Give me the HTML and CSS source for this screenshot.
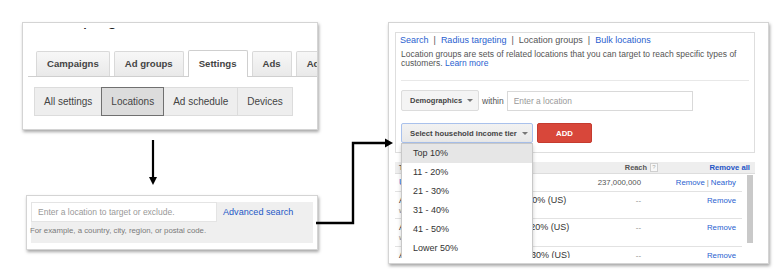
FILE: index.html
```html
<!DOCTYPE html>
<html lang="en">
<head>
    <meta charset="UTF-8">
    <title>Location groups</title>
    <link rel="stylesheet" href="styles.css">
</head>
<body>
<div class="canvas">

    <!-- campaign settings tabs -->
    <div class="shot shot-tabs">
        <div class="page-title"><span>Campaign</span></div>
        <div class="tabs">
            <span class="tab">Campaigns</span>
            <span class="tab">Ad groups</span>
            <span class="tab active">Settings</span>
            <span class="tab">Ads</span>
            <span class="tab">Ad extensions</span>
        </div>
        <div class="subtabs">
            <span class="subtab">All settings</span>
            <span class="subtab active">Locations</span>
            <span class="subtab">Ad schedule</span>
            <span class="subtab">Devices</span>
        </div>
    </div>

    <!-- location search box -->
    <div class="shot shot-search">
        <div class="search-area">
            <div class="search-row">
                <div class="search-input">Enter a location to target or exclude.</div>
                <a class="search-link" href="javascript:void(0)">Advanced search</a>
            </div>
            <div class="search-hint">For example, a country, city, region, or postal code.</div>
        </div>
    </div>

    <!-- location groups panel -->
    <div class="shot shot-groups">
        <div class="crop">
            <div class="loc-box">
                <div class="loc-links">
                    <a href="javascript:void(0)">Search</a><span class="sep">|</span><a href="javascript:void(0)">Radius targeting</a><span class="sep">|</span><span class="current">Location groups</span><span class="sep">|</span><a href="javascript:void(0)">Bulk locations</a>
                </div>
                <div class="loc-desc">Location groups are sets of related locations that you can target to reach specific types of customers. <a href="javascript:void(0)">Learn more</a></div>
                <div class="loc-rule"></div>
                <div class="loc-row">
                    <span class="btn btn-demo">Demographics<i class="caret"></i></span>
                    <span class="within">within</span>
                    <span class="loc-input">Enter a location</span>
                </div>
                <div class="loc-row loc-row-tier">
                    <span class="btn btn-tier">Select household income tier<i class="caret"></i></span>
                    <span class="btn btn-add">ADD</span>
                </div>
            </div>

            <div class="targets">
                <div class="targets-head">
                    <span class="th-name">Targeted locations</span>
                    <span class="th-reach">Reach <i class="help">?</i></span>
                    <span class="th-remove"><a href="javascript:void(0)">Remove all</a></span>
                </div>
                <div class="targets-body">
                    <div class="rows">
                        <div class="row row-first">
                            <span class="cell-name"><a href="javascript:void(0)">United States</a></span>
                            <span class="cell-reach">237,000,000</span>
                            <span class="cell-act"><a href="javascript:void(0)">Remove</a><span class="bar">|</span><a href="javascript:void(0)">Nearby</a></span>
                        </div>
                        <div class="row">
                            <span class="cell-name">Average household income Top 10% (US)<small>within United States</small></span>
                            <span class="cell-reach dash">--</span>
                            <span class="cell-act"><a href="javascript:void(0)">Remove</a></span>
                        </div>
                        <div class="row">
                            <span class="cell-name">Average household income: 11 - 20% (US)<small>within United States</small></span>
                            <span class="cell-reach dash">--</span>
                            <span class="cell-act"><a href="javascript:void(0)">Remove</a></span>
                        </div>
                        <div class="row">
                            <span class="cell-name">Average household income: 21 - 30% (US)<small>within United States</small></span>
                            <span class="cell-reach dash">--</span>
                            <span class="cell-act"><a href="javascript:void(0)">Remove</a></span>
                        </div>
                    </div>
                    <div class="track"><div class="thumb"></div></div>
                </div>
            </div>

            <!-- open income tier menu -->
            <ul class="menu">
                <li class="hover">Top 10%</li>
                <li>11 - 20%</li>
                <li>21 - 30%</li>
                <li>31 - 40%</li>
                <li>41 - 50%</li>
                <li>Lower 50%</li>
            </ul>
        </div>
    </div>

    <!-- arrows between the shots -->
    <svg class="arrows" width="780" height="275" viewBox="0 0 780 275">
        <line x1="153" y1="140" x2="153" y2="178" stroke="#000" stroke-width="2.2"/>
        <polygon points="149,177 157,177 153,185" fill="#000"/>
        <polyline points="316,223 353,223 353,143 386,143" fill="none" stroke="#000" stroke-width="2.4"/>
        <polygon points="385,138.5 393,143 385,147.5" fill="#000"/>
    </svg>
</div>
</body>
</html>
```

FILE: styles.css
```css
*{
    box-sizing: border-box;
}
body{
    margin: 0;
    background: #fff;
    font-family: "Liberation Sans", Arial, sans-serif;
    color: #444;
}
a{
    color: #2a5fd0;
    text-decoration: none;
}
.canvas{
    position: relative;
    width: 780px;
    height: 275px;
    overflow: hidden;
}
.shot{
    position: absolute;
    background: #fff;
    border: 1px solid #d4d4d4;
    box-shadow: 1px 2px 3px rgba(0,0,0,.35);
    overflow: hidden;
}

/* tabs shot */
.shot-tabs{
    left: 22px;
    top: 22px;
    width: 296px;
    height: 108px;
}
.page-title{
    margin-top: 5px;
    height: 3px;
    padding-left: 22px;
    overflow: hidden;
    white-space: nowrap;
}
.page-title span{
    display: block;
    margin-top: -18px;
    font-size: 18px;
    line-height: 18px;
    color: #222;
}
.tabs{
    display: flex;
    align-items: flex-end;
    gap: 4px;
    height: 27px;
    margin: 19px 0 0 5px;
    padding-left: 8px;
    border-bottom: 1px solid #cfcfcf;
    white-space: nowrap;
}
.tab{
    height: 25px;
    line-height: 24px;
    padding: 0 10px;
    border: 1px solid #d9d9d9;
    border-bottom: none;
    border-radius: 2px 2px 0 0;
    background: linear-gradient(#f7f7f7, #e9e9e9);
    font-size: 9.6px;
    font-weight: bold;
    color: #444;
}
.tab.active{
    height: 27px;
    margin-bottom: -1px;
    line-height: 26px;
    background: #fff;
    border-color: #cfcfcf;
}
.subtabs{
    display: flex;
    height: 29px;
    margin: 10px 0 0 11px;
}
.subtab{
    line-height: 27px;
    padding: 0 9px;
    border: 1px solid #dcdcdc;
    background: #eeeeee;
    font-size: 10px;
    color: #444;
}
.subtab + .subtab{
    margin-left: -1px;
}
.subtab.active{
    position: relative;
    z-index: 1;
    background: #dcdcdc;
    border-color: #707070;
}

/* search shot */
.shot-search{
    left: 26px;
    top: 195px;
    width: 292px;
    height: 55px;
    padding: 6px 4px 5px 4px;
}
.search-area{
    height: 41px;
    background: #efefef;
}
.search-row{
    display: flex;
    align-items: center;
}
.search-input{
    width: 186px;
    height: 20px;
    padding-left: 6px;
    line-height: 18px;
    background: #fff;
    border: 1px solid #e4e4e4;
    font-size: 8.5px;
    color: #999;
}
.search-link{
    margin-left: 6px;
    font-size: 9.1px;
    color: #2458c6;
}
.search-hint{
    margin: 4px 0 0 -1px;
    line-height: 9px;
    font-size: 7.8px;
    color: #7a7a7a;
    white-space: nowrap;
}

/* location groups shot */
.shot-groups{
    left: 388px;
    top: 22px;
    width: 381px;
    height: 242px;
    padding: 9px 0 0 6px;
}
.crop{
    position: relative;
    width: 360px;
    height: 226px;
    overflow: hidden;
}
.loc-box{
    height: 121px;
    padding: 2px 5px 0 5px;
    border: 1px solid #dedede;
}
.loc-links{
    margin-left: -1px;
    line-height: 11px;
    font-size: 9px;
    white-space: nowrap;
}
.loc-links .sep{
    padding: 0 5px;
    color: #555;
}
.loc-links .current{
    color: #555;
}
.loc-desc{
    margin-top: 4px;
    line-height: 9px;
    font-size: 8.5px;
    color: #555;
}
.loc-rule{
    margin-top: 12px;
    border-top: 1px solid #e8e8e8;
}
.loc-row{
    display: flex;
    align-items: center;
    height: 21px;
    margin-top: 9px;
}
.loc-row-tier{
    height: 20px;
    margin-top: 12px;
}
.btn{
    display: flex;
    align-items: center;
    height: 21px;
    padding-left: 8px;
    border: 1px solid #dcdcdc;
    border-radius: 2px;
    background: #f4f4f4;
    font-weight: bold;
    font-size: 7.5px;
    color: #444;
    white-space: nowrap;
}
.btn-demo{
    width: 78px;
}
.btn-tier{
    width: 132px;
    height: 20px;
    font-size: 7.7px;
    background: linear-gradient(#f2f2f2, #e8e8e8);
    border-color: #a9c1ec;
}
.btn-add{
    justify-content: center;
    width: 55px;
    height: 20px;
    margin-left: 4px;
    padding: 0;
    background: #d8473a;
    border-color: #c53b2f;
    color: #fff;
    font-size: 7.8px;
}
.caret{
    margin-left: 5px;
    border-left: 3px solid transparent;
    border-right: 3px solid transparent;
    border-top: 3px solid #777;
}
.within{
    margin: 0 3px;
    font-size: 8.5px;
    color: #555;
}
.loc-input{
    width: 186px;
    height: 20px;
    padding-left: 6px;
    line-height: 18px;
    border: 1px solid #d9d9d9;
    font-size: 8.4px;
    color: #999;
}

/* targeted locations table */
.targets{
    margin-top: 9px;
}
.targets-head{
    display: grid;
    grid-template-columns: 1fr 77px 92px;
    align-items: center;
    height: 12px;
    padding: 0 5px 0 4px;
    background: #eeeeee;
    border-bottom: 1px solid #dddddd;
    font-size: 7.4px;
    font-weight: bold;
    color: #555;
}
.th-reach{
    display: flex;
    justify-content: flex-end;
    align-items: center;
}
.help{
    display: inline-block;
    width: 8px;
    height: 9px;
    margin-left: 3px;
    border: 1px solid #cfcfcf;
    background: #f8f8f8;
    font-style: normal;
    font-weight: normal;
    font-size: 6px;
    line-height: 7px;
    text-align: center;
    color: #aaa;
}
.th-remove{
    text-align: right;
    font-size: 7.7px;
}
.th-remove a{
    color: #1f55c6;
}
.targets-body{
    display: flex;
}
.rows{
    width: 347px;
}
.row{
    display: grid;
    grid-template-columns: 182px 60px 1fr;
    height: 27px;
    padding: 3px 6px 0 4px;
    border-bottom: 1px solid #e2e2e2;
    white-space: nowrap;
}
.row-first{
    height: 18px;
}
.row + .row + .row{
    height: 28px;
}
.cell-name{
    line-height: 11px;
    font-size: 9px;
    color: #333;
}
.cell-name small{
    display: block;
    line-height: 9px;
    font-size: 7px;
    color: #888;
}
.cell-reach{
    line-height: 11px;
    font-size: 7.8px;
    text-align: right;
    color: #555;
}
.cell-reach.dash{
    color: #888;
}
.cell-act{
    line-height: 11px;
    font-size: 7.8px;
    text-align: right;
}
.cell-act .bar{
    padding: 0 2px;
    color: #888;
}
.track{
    flex: 1;
}
.thumb{
    width: 6px;
    height: 68px;
    margin: 1px 0 0 5px;
    background: #c9c9c9;
}

/* dropdown menu */
.menu{
    position: absolute;
    left: 6px;
    top: 111px;
    width: 132px;
    height: 130px;
    margin: 0;
    padding: 0;
    list-style: none;
    background: #fff;
    border: 1px solid #c8c8c8;
    box-shadow: 0 2px 4px rgba(0,0,0,.2);
}
.menu li{
    height: 19px;
    padding-left: 11px;
    line-height: 19px;
    font-size: 9px;
    color: #333;
}
.menu li.hover{
    background: #e6e6e6;
}

.arrows{
    position: absolute;
    left: 0;
    top: 0;
    pointer-events: none;
}
```
